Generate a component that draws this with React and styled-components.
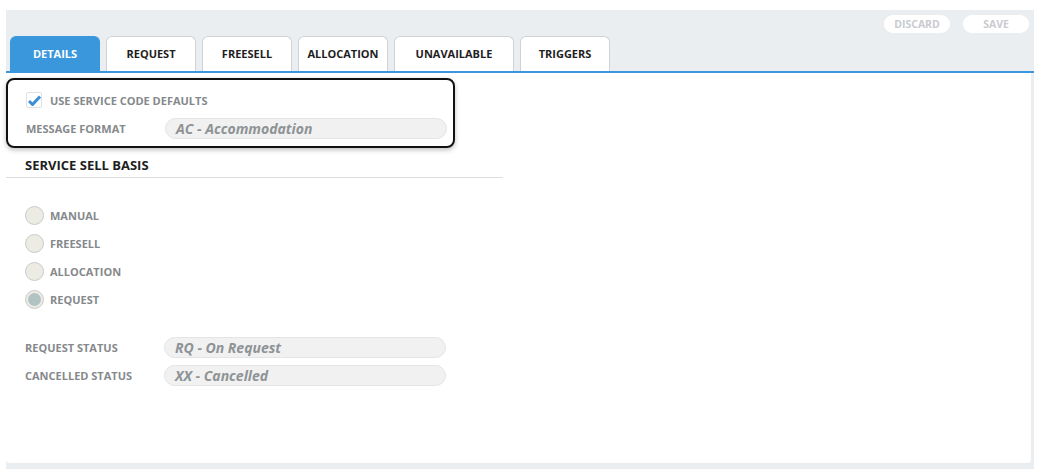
import React from 'react';
import styled, { createGlobalStyle } from 'styled-components';

const GlobalStyle = createGlobalStyle`
  body {
    margin: 0;
    background: #fff;
    font-family: "Open Sans", "Liberation Sans", sans-serif;
  }
`

const Panel = styled.div`
  margin: 10px 0 0 6px;
  width: 1028px;
  height: 459px;
  background: #ebeef0;
  display: flex;
  flex-direction: column;
  padding: 0 3px 6px 0;
  box-sizing: border-box;
`

const Header = styled.div`
  display: flex;
  flex-direction: column;
  height: 61px;
  border-bottom: 2px solid #3a97dc;
  margin-right: -3px;
`

const Actions = styled.div`
  display: flex;
  justify-content: flex-end;
  gap: 13px;
  padding: 5px 5px 0 0;
  height: 18px;
`

const ActionButton = styled.button`
  width: 66px;
  height: 18px;
  border: none;
  border-radius: 9px;
  background: #fff;
  color: #c9cbcd;
  font-family: inherit;
  font-weight: 700;
  font-size: 10.5px;
  padding: 0;
`

const Tabs = styled.div`
  display: flex;
  gap: 6px;
  padding: 3px 0 0 4px;
  margin-top: auto;
`

const Tab = styled.div`
  width: ${p => p.w}px;
  height: 35px;
  box-sizing: border-box;
  display: flex;
  align-items: center;
  justify-content: center;
  padding-bottom: 2px;
  border-radius: 6px 6px 0 0;
  border: 1px solid ${p => (p.active ? '#3a97dc' : '#cfd3d6')};
  border-bottom: none;
  background: ${p => (p.active ? '#3a97dc' : '#fff')};
  color: ${p => (p.active ? '#fff' : '#1e1e1e')};
  font-weight: 700;
  font-size: 11px;
`

const Content = styled.div`
  flex: 1;
  background: #fff;
  border-radius: 0 0 4px 4px;
  padding-top: 5px;
`

const DefaultsBox = styled.div`
  width: 449px;
  height: 70px;
  box-sizing: border-box;
  border: 2px solid #111;
  border-radius: 8px;
  box-shadow: 0 2px 5px rgba(0, 0, 0, 0.25);
  padding: 12px 0 0 18px;
  display: flex;
  flex-direction: column;
  gap: 10px;
`

const CheckRow = styled.div`
  display: flex;
  align-items: center;
  gap: 8px;
`

const CheckBox = styled.div`
  width: 16px;
  height: 16px;
  box-sizing: border-box;
  border: 1px solid #dfe1e3;
  border-radius: 2px;
  display: flex;
  align-items: center;
  justify-content: center;
`

const Label = styled.span`
  font-weight: 700;
  font-size: 11px;
  color: #85898c;
  width: ${p => (p.w ? `${p.w}px` : 'auto')};
  flex-shrink: 0;
`

const FieldRow = styled.div`
  display: flex;
  align-items: center;
  height: 21px;
`

const Field = styled.div`
  width: 282px;
  height: 21px;
  box-sizing: border-box;
  border: 1px solid #e2e4e5;
  border-radius: 11px;
  background: #f1f1f1;
  color: #8e9396;
  font-style: italic;
  font-weight: 700;
  font-size: 14px;
  padding-left: 10px;
  display: flex;
  align-items: center;
`

const Section = styled.div`
  width: 497px;
  border-bottom: 1px solid #dcdfe2;
  padding: 8px 0 4px 19px;
  box-sizing: border-box;
  font-weight: 700;
  font-size: 13px;
  color: #1e1e1e;
  height: 30px;
`

const RadioList = styled.div`
  display: flex;
  flex-direction: column;
  gap: 8px;
  padding: 27px 0 0 19px;
`

const RadioRow = styled.div`
  display: flex;
  align-items: center;
  gap: 6px;
  height: 20px;
`

const Radio = styled.div`
  width: 19px;
  height: 19px;
  box-sizing: border-box;
  border-radius: 50%;
  border: 1px solid #c8ccc8;
  background: #ecebe4;
  display: flex;
  align-items: center;
  justify-content: center;

  &::after {
    content: '';
    display: ${p => (p.checked ? 'block' : 'none')};
    width: 13px;
    height: 13px;
    border-radius: 50%;
    background: #b2c3c3;
  }
`

const StatusList = styled.div`
  display: flex;
  flex-direction: column;
  gap: 7px;
  padding: 28px 0 0 19px;
`

const tabs = [
  ['DETAILS', 90],
  ['REQUEST', 90],
  ['FREESELL', 90],
  ['ALLOCATION', 90],
  ['UNAVAILABLE', 120],
  ['TRIGGERS', 90]
]

const Check = () => (
  <svg width="13" height="11" viewBox="0 0 13 11">
    <path d="M1 6 L4.5 9.5 L12 1.5" fill="none" stroke="#3a8fd6" strokeWidth="3" strokeLinejoin="miter" />
  </svg>
)

const App = () => {
  return (
    <>
      <GlobalStyle />
      <Panel>
        <Header>
          <Actions>
            <ActionButton>DISCARD</ActionButton>
            <ActionButton>SAVE</ActionButton>
          </Actions>
          <Tabs>
            {tabs.map(([name, w], i) => (
              <Tab key={name} w={w} active={i === 0}>{name}</Tab>
            ))}
          </Tabs>
        </Header>

        <Content>
          <DefaultsBox>
            <CheckRow>
              <CheckBox><Check /></CheckBox>
              <Label>USE SERVICE CODE DEFAULTS</Label>
            </CheckRow>
            <FieldRow>
              <Label w={139}>MESSAGE FORMAT</Label>
              <Field>AC - Accommodation</Field>
            </FieldRow>
          </DefaultsBox>

          <Section>SERVICE SELL BASIS</Section>

          <RadioList>
            {['MANUAL', 'FREESELL', 'ALLOCATION', 'REQUEST'].map(r => (
              <RadioRow key={r}>
                <Radio checked={r === 'REQUEST'} />
                <Label>{r}</Label>
              </RadioRow>
            ))}
          </RadioList>

          <StatusList>
            <FieldRow>
              <Label w={139}>REQUEST STATUS</Label>
              <Field>RQ - On Request</Field>
            </FieldRow>
            <FieldRow>
              <Label w={139}>CANCELLED STATUS</Label>
              <Field>XX - Cancelled</Field>
            </FieldRow>
          </StatusList>
        </Content>
      </Panel>
    </>
  )
}

export default App;
